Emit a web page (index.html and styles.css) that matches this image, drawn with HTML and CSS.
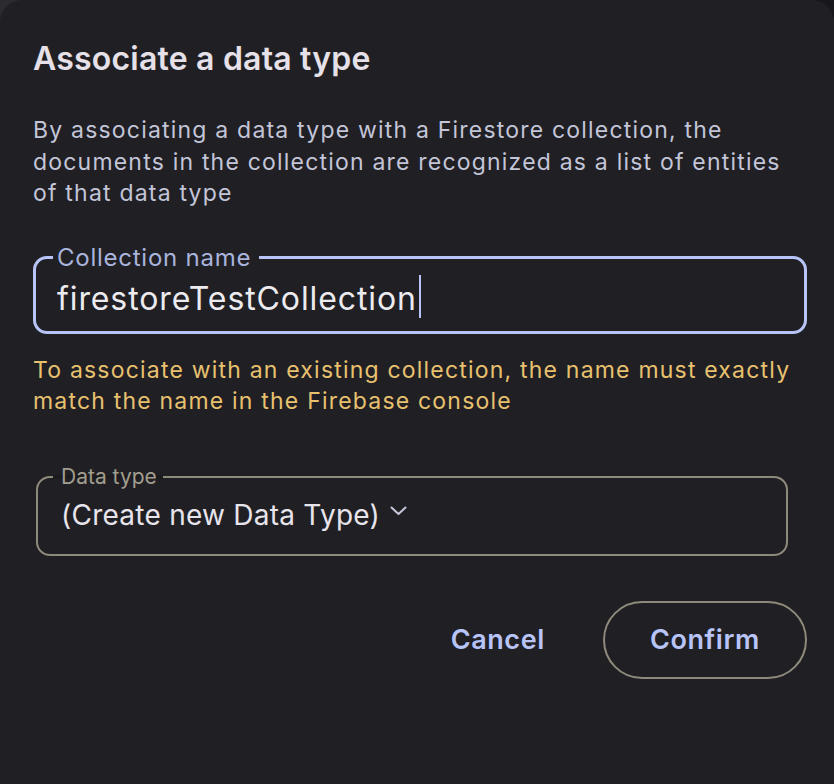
FILE: index.html
```html
<!DOCTYPE html>
<html>
<head>
<meta charset="utf-8">
<link rel="stylesheet" href="styles.css">
</head>
<body>
<div class="dialog">
  <h1 class="title">Associate a data type</h1>
  <p class="desc">By associating a data type with a Firestore collection, the documents in the collection are recognized as a list of entities of that data type</p>
  <fieldset class="field field-focus">
    <legend class="field-label">Collection name</legend>
    <div class="field-value">firestoreTestCollection<span class="caret"></span></div>
  </fieldset>
  <p class="helper">To associate with an existing collection, the name must exactly match the name in the Firebase console</p>
  <fieldset class="field field-select">
    <legend class="field-label select-label">Data type</legend>
    <div class="select-value">(Create new Data Type)
      <svg class="chevron" width="17" height="10" viewBox="0 0 17 10"><path d="M1.5 1.5 L8.5 8 L15.5 1.5" fill="none" stroke="#c4c6dc" stroke-width="2" stroke-linecap="round" stroke-linejoin="round"/></svg>
    </div>
  </fieldset>
  <div class="actions">
    <button class="btn btn-text">Cancel</button>
    <button class="btn btn-outline">Confirm</button>
  </div>
</div>
</body>
</html>
```
FILE: styles.css
```css
html, body {
  margin: 0;
  padding: 0;
}
body {
  font-family: Inter, "Noto Sans", sans-serif;
  width: 834px;
  height: 784px;
  overflow: hidden;
  background: linear-gradient(to right, #2c2b30 50%, #18171b 50%);
}
.dialog {
  box-sizing: border-box;
  height: 784px;
  padding: 39px 27px 0 33px;
  background: #201f24;
  border-top-left-radius: 22px;
  border-top-right-radius: 22px;
}
.title {
  margin: 0;
  font-size: 32px;
  line-height: 40px;
  font-weight: 600;
  color: #e6e1e8;
  letter-spacing: 0.2px;
}
.desc {
  margin: 36px 0 0 0;
  font-size: 23px;
  line-height: 31.5px;
  color: #c3c5d8;
  letter-spacing: 1.2px;
}
.field {
  margin: 0;
  min-width: 0;
  border-radius: 14px;
}
.field-focus {
  margin-top: 35px;
  border: 3px solid #b8c4f8;
  padding: 3px 20px 7px 17px;
}
.field-label {
  font-size: 24px;
  line-height: 26px;
  color: #a9b4dc;
  padding: 0 8px 0 4px;
  letter-spacing: 0.75px;
}
.field-value {
  font-size: 32px;
  line-height: 50px;
  height: 50px;
  color: #ecebf0;
  letter-spacing: 0.9px;
  display: flex;
  align-items: center;
  padding-left: 4px;
}
.caret {
  display: inline-block;
  width: 2px;
  height: 43px;
  background: #b8c4f8;
  margin-left: 2px;
  margin-top: -4px;
}
.helper {
  margin: 21px 0 0 0;
  font-size: 23px;
  line-height: 31.5px;
  color: #e8c16f;
  letter-spacing: 1.2px;
}
.field-select {
  margin: 47px 19px 0 3px;
  border: 2px solid #8e8a7b;
  padding: 6px 20px 19px 15px;
}
.select-label {
  font-size: 21px;
  line-height: 24px;
  color: #a29e8e;
  padding: 0 6px 0 8px;
  letter-spacing: 0;
  background: linear-gradient(#201f24 0 10px, #1b1a1e 10px 14px, #201f24 14px);
}
.select-value {
  font-size: 28px;
  line-height: 40px;
  height: 40px;
  color: #e8e4ec;
  letter-spacing: 0.25px;
  display: flex;
  align-items: center;
  gap: 10px;
  padding-left: 8px;
}
.chevron {
  margin-top: -7px;
}
.actions {
  display: flex;
  justify-content: flex-end;
  align-items: center;
  gap: 18px;
  margin-top: 45px;
}
.btn {
  font-family: Inter, "Noto Sans", sans-serif;
  font-size: 27px;
  font-weight: 600;
  color: #b8c4f8;
  background: transparent;
  border: none;
  cursor: pointer;
  letter-spacing: 0.6px;
}
.btn-text {
  padding: 0 40px;
  height: 78px;
}
.btn-outline {
  height: 78px;
  padding: 0 45px;
  border: 2px solid #8e8a7b;
  border-radius: 39px;
}
```
